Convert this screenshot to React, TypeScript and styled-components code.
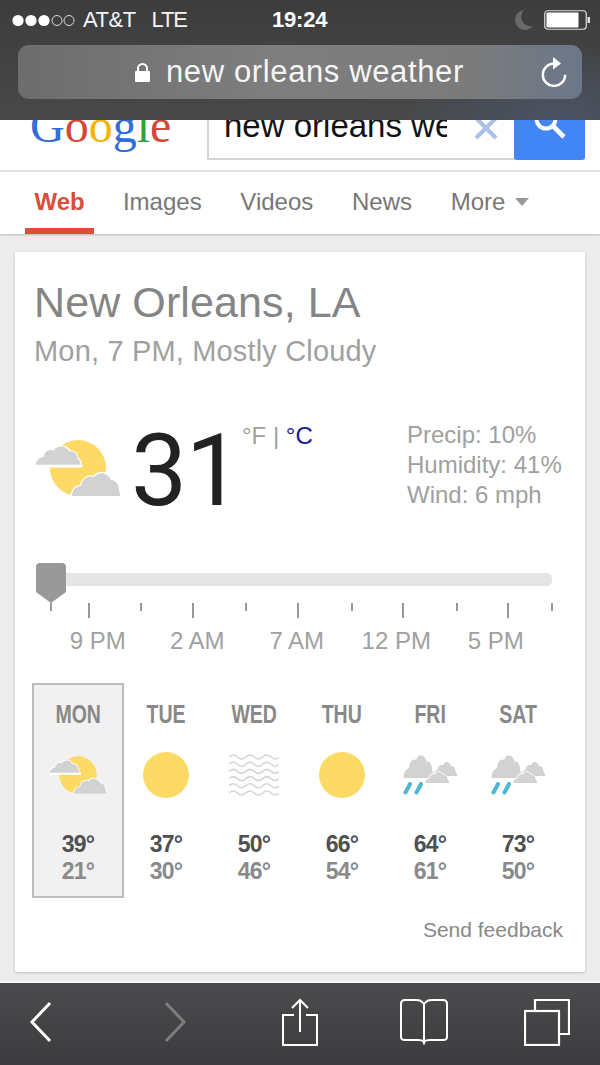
import React from "react";
import styled, { createGlobalStyle } from "styled-components";

const Global = createGlobalStyle`
  html, body { margin: 0; padding: 0; background: #ececec; }
  body { font-family: "Liberation Sans", Arial, sans-serif; }
  * { box-sizing: border-box; }
`;

const Page = styled.div`
  width: 600px; height: 1065px; display: flex; flex-direction: column; overflow: hidden; background: #ececec;
`;
const TopBar = styled.header`
  height: 120px; flex: none; padding: 0 18px; position: relative;
  background: radial-gradient(ellipse 170px 70px at 560px 115px, #4a5263 0%, rgba(74,82,99,0) 100%), linear-gradient(180deg, #3d3d3d, #484848);
`;
const StatusRow = styled.div`
  height: 45px; margin: 0 -18px; padding: 0 10px 5px 12px; display: grid; grid-template-columns: 260px 1fr auto; align-items: center;
  color: #fff; font-size: 22px;
`;
const StatusLeft = styled.div`
  display: flex; align-items: center;
`;
const Carrier = styled.span`
  margin-left: 8px; letter-spacing: -0.5px; color: #f4f4f4;
`;
const Network = styled.span`
  margin-left: 16px; letter-spacing: -1.2px; color: #f4f4f4;
`;
const Time = styled.span`
  font-weight: 700; letter-spacing: -0.2px; font-size: 22px;
`;
const StatusRight = styled.div`
  display: flex; align-items: center; gap: 11px;
`;
const UrlBar = styled.div`
  height: 54px; border-radius: 11px; display: grid; grid-template-columns: 117px 31px 1fr 41px; align-items: center;
  background: linear-gradient(90deg, #6d6d6d 0%, #7e7e7e 45%, #7b7b7b 80%, #6b778a 100%);
  color: #fff; font-size: 31px;
`;
const LockSlot = styled.div`
  grid-column: 2; display: flex;
`;
const UrlText = styled.span`
  letter-spacing: 0.62px; color: #f6f6f6;
`;

const SearchStrip = styled.div`
  height: 50px; flex: none; background: #fff; overflow: hidden; display: flex; align-items: flex-end;
  padding: 0 15px 10px 30px;
`;
const Logo = styled.div`
  font-family: "Liberation Serif", serif; font-size: 48px; line-height: 48px; width: 177px; flex: none; margin-bottom: 10px;
`;
const LogoLetter = styled.span<{ $c: string }>`
  color: ${(p) => p.$c};
`;
const SearchBox = styled.div`
  flex: 1; height: 60px; display: flex; border: 2px solid #d4d4d4; border-right: 0; background: #fff; position: relative; border-radius: 0 0 3px 0;
`;
const SearchText = styled.div`
  width: 238px; padding-left: 15px; font-size: 33px; line-height: 52px; color: #111; overflow: hidden; white-space: nowrap; flex: none; margin-top: -2px;
`;
const ClearSlot = styled.div`
  flex: 1; display: flex; align-items: flex-end; justify-content: center; padding-bottom: 18px; padding-left: 11px;
`;
const SearchBtn = styled.div`
  width: 71px; height: 60px; margin: -2px 0 -2px 0; background: #4285f4; border-radius: 0 0 3px 3px; overflow: hidden; display: flex; justify-content: center; align-items: flex-end; padding-bottom: 21px; flex: none;
`;

const Tabs = styled.nav`
  height: 64px; flex: none; background: #fff; border-top: 2px solid #e3e3e3; padding-left: 25px; display: flex; gap: 18.7px; position: relative;
  box-shadow: 0 1px 2px rgba(0,0,0,.22);
`;
const Tab = styled.div<{ $active?: boolean }>`
  height: 62px; padding: 0 ${(p) => (p.$active ? 9.5 : 10)}px; display: flex; align-items: flex-start; gap: 10px; font-size: 24px; line-height: 60px;
  color: ${(p) => (p.$active ? "#dd4b39" : "#777")}; font-weight: ${(p) => (p.$active ? 700 : 400)};
  border-bottom: 6px solid ${(p) => (p.$active ? "#dd4b39" : "transparent")};
`;
const Caret = styled.i`
  width: 0; height: 0; border: 7.5px solid transparent; border-top: 8px solid #999; border-bottom: 0; margin-top: 26px;
`;

const Main = styled.main`
  flex: 1; padding: 18px 15px 0; background: #ececec;
`;
const Card = styled.section`
  height: 720px; background: #fff; border-radius: 2px; padding: 26px 33px 0 19px; box-shadow: 0 1px 3px rgba(0,0,0,.2);
`;
const Title = styled.h1`
  margin: 0; font-weight: 400; font-size: 43px; line-height: 48px; color: #858585; letter-spacing: 0.1px; white-space: nowrap;
`;
const Subtitle = styled.div`
  margin-top: 8px; font-size: 29px; line-height: 34px; color: #a0a0a0; letter-spacing: 0.17px; white-space: nowrap;
`;
const Current = styled.div`
  margin-top: 52px; height: 100px; display: flex; align-items: flex-start; position: relative;
`;
const BigIconSlot = styled.div`
  width: 97px; padding: 20px 0 0 2px; flex: none;
`;
const BigTemp = styled.div`
  font-family: Roboto, "Liberation Sans", sans-serif; font-weight: 400; font-size: 100px; line-height: 100px; color: #222; width: 111px; margin-top: 1px; letter-spacing: -1.5px; flex: none; white-space: nowrap;
`;
const Units = styled.div`
  font-size: 24px; line-height: 30px; color: #a0a0a0; width: 165px; flex: none; margin-top: 1px; white-space: nowrap;
`;
const Celsius = styled.span`
  color: #1a1a9c;
`;
const Stats = styled.div`
  font-size: 24px; line-height: 30px; color: #a0a0a0; white-space: nowrap; margin-right: -20px;
`;
const Track = styled.div`
  margin: 53px 0 0 16px; height: 13px; background: #e5e5e5; border-radius: 5px; position: relative;
`;
const Thumb = styled.svg`
  position: absolute; left: -14px; top: -10px;
`;
const Ticks = styled.svg`
  display: block; margin: 17px 0 0 0;
`;
const TimeLabels = styled.div`
  margin-top: 7px; padding-left: 14px; display: flex; font-size: 24px; line-height: 30px; color: #a0a0a0;
`;
const TimeLabel = styled.span`
  width: 99.5px; text-align: center; flex: none;
`;
const Forecast = styled.div`
  margin-top: 27px; display: grid; grid-template-columns: repeat(6, 88px);
`;
const Day = styled.div<{ $active?: boolean }>`
  height: 215px; display: flex; flex-direction: column; align-items: center; padding-top: 17px; border: 2px solid transparent;
  ${(p) => p.$active && "background:#f1f1f1; border-color:#bdbdbd; margin:0 -2px;"}
`;
const DayName = styled.div`
  font-weight: 700; font-size: 25px; line-height: 24px; color: #888; transform: scaleX(.78); white-space: nowrap;
`;
const IconSlot = styled.div`
  height: 50px; margin-top: 24px; display: flex; align-items: center; justify-content: center;
`;
const High = styled.div`
  margin-top: 31px; font-weight: 700; font-size: 23px; line-height: 26px; color: #505050; letter-spacing: -0.7px;
`;
const Low = styled.div`
  margin-top: 1px; font-weight: 700; font-size: 23px; line-height: 26px; color: #8a8a8a; letter-spacing: -0.7px;
`;
const Feedback = styled.div`
  margin-top: 20px; margin-right: -11px; text-align: right; font-size: 21px; line-height: 24px; color: #888;
`;

const Toolbar = styled.footer`
  height: 84px; flex: none; border-top: 2px solid #f6f6f6; padding-bottom: 4px; background: linear-gradient(180deg, #4b4b4e, #3c3c3e);
  display: grid; grid-template-columns: 82px 186px 64px 184px 62px; align-items: center;
`;
const ToolSlot = styled.div`
  display: flex; justify-content: center; align-items: center;
`;

const CLOUD = "M1 24 C1 19 5 16 9 16 C10 10 15 7 20 9 C23 3 33 3 36 10 C41 9 45 13 45 18 C47 19 48 22 48 24 Z";
const YELLOW = "#fdda66";
const GREY = "#d2d2d2";

const PartlyCloudy = ({ w, h }: { w: number; h: number }) => (
  <svg width={w} height={h} viewBox="0 0 84 56">
    <circle cx="42" cy="28" r="28" fill={YELLOW} />
    <g transform="translate(-1 2) scale(.95 .95)">
      <rect x="0" y="24" width="50" height="3" fill="#fff" />
      <path d={CLOUD} fill={GREY} stroke="#fff" strokeWidth="2.4" paintOrder="stroke" />
    </g>
    <g transform="translate(35 28)">
      <path d="M1 28 C1 22 5 18 10 18 C11 11 17 7 23 9 C27 3 37 4 40 12 C45 12 48 17 48 22 C49 24 49 26 49 28 Z" fill={GREY} stroke="#fff" strokeWidth="2.4" paintOrder="stroke" />
    </g>
  </svg>
);
const Sun = () => (
  <svg width="46" height="46" viewBox="0 0 46 46"><circle cx="23" cy="23" r="23" fill={YELLOW} /></svg>
);
const Haze = () => (
  <svg width="50" height="44" viewBox="0 0 50 44" fill="none" stroke="#d6d6d6" strokeWidth="1.5">
    {[0, 1, 2, 3, 4, 5].map((i) => (
      <path key={i} d={`M0 ${4 + i * 7.2} q4.2 -4 8.4 0 t8.4 0 t8.4 0 t8.4 0 t8.4 0 t8.4 0`} />
    ))}
  </svg>
);
const Rain = () => (
  <svg width="54" height="40" viewBox="0 0 54 40">
    <g transform="translate(30 3.8) scale(.5 .72)"><path d={CLOUD} fill={GREY} /></g>
    <g transform="translate(0 -5.3) scale(.65 1.18)"><path d={CLOUD} fill={GREY} stroke="#fff" strokeWidth="1.6" paintOrder="stroke" /></g>
    <g transform="translate(22 14.5) scale(.5 .56)"><path d={CLOUD} fill={GREY} stroke="#fff" strokeWidth="3" paintOrder="stroke" /></g>
    <path d="M7 29 L2.5 37.5 M18 29 L13.5 37.5" stroke="#4db8cf" strokeWidth="4" strokeLinecap="round" />
  </svg>
);

const days = [
  { d: "MON", hi: "39°", lo: "21°", icon: <PartlyCloudy w={56} h={38} />, active: true },
  { d: "TUE", hi: "37°", lo: "30°", icon: <Sun /> },
  { d: "WED", hi: "50°", lo: "46°", icon: <Haze /> },
  { d: "THU", hi: "66°", lo: "54°", icon: <Sun /> },
  { d: "FRI", hi: "64°", lo: "61°", icon: <Rain /> },
  { d: "SAT", hi: "73°", lo: "50°", icon: <Rain /> },
];
const ticks = [51, 89, 141, 193, 246, 298, 352, 403, 457, 508, 552];

export default function App() {
  return (
    <Page>
      <Global />
      <TopBar>
        <StatusRow>
          <StatusLeft>
            <svg width="63" height="13" viewBox="0 0 63 13">
              {[6, 19, 32].map((x) => <circle key={x} cx={x} cy="6.5" r="5.6" fill="#fff" />)}
              {[45, 57].map((x) => <circle key={x} cx={x} cy="6.5" r="5" fill="none" stroke="#ddd" strokeWidth="1" />)}
            </svg>
            <Carrier>AT&amp;T</Carrier>
            <Network>LTE</Network>
          </StatusLeft>
          <Time>19:24</Time>
          <StatusRight>
            <svg width="18" height="20" viewBox="0 0 18 20"><path d="M9 0 A10 10 0 1 0 18 16 A9.5 9.5 0 0 1 9 0 Z" fill="#696969" /></svg>
            <svg width="46" height="20" viewBox="0 0 46 20">
              <rect x=".75" y=".75" width="41.5" height="18.5" rx="3" fill="none" stroke="#ddd" strokeWidth="1.2" />
              <rect x="2.5" y="2.5" width="32" height="15" rx="1" fill="#fff" />
              <rect x="43.5" y="7" width="2.5" height="6" fill="#ddd" />
            </svg>
          </StatusRight>
        </StatusRow>
        <UrlBar>
          <LockSlot>
            <svg width="15" height="19" viewBox="0 0 15 19" fill="#fff">
              <rect x="0" y="8" width="15" height="11" rx="1" />
              <path d="M3 9 V5.5 a4.5 4.5 0 0 1 9 0 V9" fill="none" stroke="#fff" strokeWidth="2" />
            </svg>
          </LockSlot>
          <UrlText>new orleans weather</UrlText>
          <svg width="26" height="30" viewBox="0 0 26 30" fill="none">
            <path d="M13 6.5 A11.2 11.2 0 1 0 24.2 17.7" stroke="#fff" strokeWidth="2.4" />
            <path d="M12 0 L20 6.5 L12 12.5 Z" fill="#fff" />
          </svg>
        </UrlBar>
      </TopBar>

      <SearchStrip>
        <Logo>
          <LogoLetter $c="#2f6fd8">G</LogoLetter>
          <LogoLetter $c="#d34836">o</LogoLetter>
          <LogoLetter $c="#f4b400">o</LogoLetter>
          <LogoLetter $c="#2f6fd8">g</LogoLetter>
          <LogoLetter $c="#2f9e44">l</LogoLetter>
          <LogoLetter $c="#d34836">e</LogoLetter>
        </Logo>
        <SearchBox>
          <SearchText>new orleans weather</SearchText>
          <ClearSlot>
            <svg width="24" height="24" viewBox="0 0 24 24" stroke="#aac0e8" strokeWidth="4.2"><path d="M2 2 L22 22 M22 2 L2 22" /></svg>
          </ClearSlot>
          <SearchBtn>
            <svg width="32" height="32" viewBox="0 0 32 32" fill="none" stroke="#fff" strokeWidth="4">
              <circle cx="12" cy="12" r="9.5" />
              <path d="M19 19 L30 30" strokeWidth="4.6" />
            </svg>
          </SearchBtn>
        </SearchBox>
      </SearchStrip>

      <Tabs>
        <Tab $active>Web</Tab>
        <Tab>Images</Tab>
        <Tab>Videos</Tab>
        <Tab>News</Tab>
        <Tab>More<Caret /></Tab>
      </Tabs>

      <Main>
        <Card>
          <Title>New Orleans, LA</Title>
          <Subtitle>Mon, 7 PM, Mostly Cloudy</Subtitle>
          <Current>
            <BigIconSlot><PartlyCloudy w={84} h={56} /></BigIconSlot>
            <BigTemp>31</BigTemp>
            <Units>°F | <Celsius>°C</Celsius></Units>
            <Stats>Precip: 10%<br />Humidity: 41%<br />Wind: 6 mph</Stats>
          </Current>
          <Track>
            <Thumb width="30" height="40" viewBox="0 0 30 40">
              <path d="M4 0 H26 a4 4 0 0 1 4 4 V29 L15 40 L0 29 V4 a4 4 0 0 1 4 -4 Z" fill="#999" />
            </Thumb>
          </Track>
          <Ticks width="534" height="16" viewBox="34 0 534 16">
            {ticks.map((x, i) => (
              <rect key={x} x={x - 1} y="0" width="2" height={i % 2 ? 15 : 8} fill="#999" />
            ))}
          </Ticks>
          <TimeLabels>
            {["9 PM", "2 AM", "7 AM", "12 PM", "5 PM"].map((t) => <TimeLabel key={t}>{t}</TimeLabel>)}
          </TimeLabels>
          <Forecast>
            {days.map((d) => (
              <Day key={d.d} $active={d.active}>
                <DayName>{d.d}</DayName>
                <IconSlot>{d.icon}</IconSlot>
                <High>{d.hi}</High>
                <Low>{d.lo}</Low>
              </Day>
            ))}
          </Forecast>
          <Feedback>Send feedback</Feedback>
        </Card>
      </Main>

      <Toolbar>
        <ToolSlot>
          <svg width="24" height="42" viewBox="0 0 24 42" fill="none" stroke="#fff" strokeWidth="3"><path d="M21 2 L3 21 L21 40" /></svg>
        </ToolSlot>
        <ToolSlot>
          <svg width="24" height="42" viewBox="0 0 24 42" fill="none" stroke="#7d7d7f" strokeWidth="3"><path d="M3 2 L21 21 L3 40" /></svg>
        </ToolSlot>
        <ToolSlot>
          <svg width="36" height="48" viewBox="0 0 36 48" fill="none" stroke="#fff" strokeWidth="2">
            <path d="M12 17 H1 V47 H35 V17 H24 M18 34 V2 M10 10 L18 2 L26 10" />
          </svg>
        </ToolSlot>
        <ToolSlot>
          <svg width="48" height="46" viewBox="0 0 48 46" fill="none" stroke="#fff" strokeWidth="2">
            <path d="M24 5 C21 1 19 1 16 1 H5 Q1 1 1 5 V38 Q1 41 5 41 H18 C21 41 23 41 24 44 C25 41 27 41 30 41 H43 Q47 41 47 38 V5 Q47 1 43 1 H32 C29 1 27 1 24 5 Z M24 5 V44" />
          </svg>
        </ToolSlot>
        <ToolSlot>
          <svg width="46" height="47" viewBox="0 0 46 47" fill="none" stroke="#fff" strokeWidth="2.2">
            <rect x="1" y="12" width="34" height="34" />
            <path d="M11 12 V1 H45 V35 H35" />
          </svg>
        </ToolSlot>
      </Toolbar>
    </Page>
  );
}
